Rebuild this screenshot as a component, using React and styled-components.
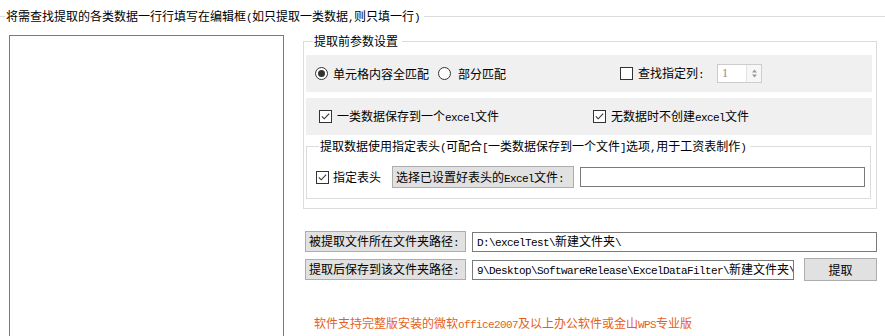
import React from "react";
import styled, { createGlobalStyle } from "styled-components";

const GlobalStyle = createGlobalStyle`
  html, body {
    margin: 0;
    background: #fff;
    overflow: hidden;
  }
  body {
    font-family: "Noto Sans CJK SC", "Liberation Sans", sans-serif;
    font-size: 12px;
    color: #000;
  }
`;

const Latin = styled.span`
  font-family: "Liberation Mono", monospace;
  font-size: 11px;
  line-height: 1;
  letter-spacing: -0.6px;
`;

const Text = styled.span`
  white-space: nowrap;
  line-height: 14px;
`;

// ascii runs get the narrow half-width look of the original ui font
function T({ children }) {
  const parts = String(children).split(/([\x21-\x7e]+)/);
  return (
    <Text>{parts.map((p, i) => (i % 2 ? <Latin key={i}>{p}</Latin> : p))}</Text>
  );
}

const Page = styled.fieldset`
  margin: 9px -2px 0;
  padding: 11px 0 0 0;
  border: 1px solid #dcdcdc;
  min-width: 0;
  min-height: 340px;
`;

const GroupTitle = styled.legend`
  margin-left: ${(p) => p.$indent}px;
  padding: 0 4px 0 1px;
  height: 14px;
  line-height: 14px;
  font-size: 12px;
  white-space: nowrap;
`;

const Body = styled.div`
  display: flex;
  align-items: flex-start;
`;

const Editor = styled.textarea`
  box-sizing: border-box;
  margin: 1px 0 0 10px;
  width: 275px;
  height: 320px;
  border: 1px solid #7a7a7a;
  resize: none;
  outline: none;
  padding: 2px;
  font: inherit;
`;

const Side = styled.div`
  margin-left: 19px;
  width: 574px;
  display: flex;
  flex-direction: column;
`;

const OptionsGroup = styled.fieldset`
  margin: 0;
  padding: 7px 4px 9px 2px;
  border: 1px solid #dcdcdc;
  min-width: 0;
`;

const Band = styled.div`
  height: 37px;
  background: #f0f0f0;
  display: flex;
  align-items: center;
  padding-left: ${(p) => p.$pad}px;
  margin-bottom: ${(p) => p.$gap || 0}px;
`;

const BandGrid = styled(Band)`
  display: grid;
  grid-template-columns: 274px 1fr;
`;

const Option = styled.label`
  display: flex;
  align-items: center;
  gap: ${(p) => p.$gap || 5}px;
  margin-left: ${(p) => p.$ml || 0}px;
  white-space: nowrap;
  line-height: 14px;
`;

const RadioDot = styled.span`
  box-sizing: border-box;
  width: 13px;
  height: 13px;
  border: 1px solid #333;
  border-radius: 50%;
  background: #fff;
  display: flex;
  align-items: center;
  justify-content: center;
  &::after {
    content: "";
    width: 7px;
    height: 7px;
    border-radius: 50%;
    background: ${(p) => (p.$on ? "#333" : "transparent")};
  }
`;

const CheckBox = styled.span`
  box-sizing: border-box;
  width: 13px;
  height: 13px;
  border: 1px solid #333;
  background: #fff;
  display: flex;
  flex: none;
`;

function Check({ on }) {
  return (
    <CheckBox>
      {on && (
        <svg width="11" height="11" viewBox="0 0 11 11">
          <path d="M1.8 5.4 L4.2 7.8 L9.2 2.6" fill="none" stroke="#333" strokeWidth="1.1" />
        </svg>
      )}
    </CheckBox>
  );
}

const Spinner = styled.div`
  box-sizing: border-box;
  margin-left: 13px;
  width: 45px;
  height: 19px;
  border: 1px solid #cccccc;
  display: flex;
  background: #fff;
`;

const SpinValue = styled.span`
  flex: 1;
  padding-left: 4px;
  color: #8a8a8a;
  line-height: 17px;
  font-family: "Liberation Serif", serif;
  font-size: 12px;
`;

const SpinArrows = styled.span`
  width: 14px;
  border-left: 1px solid #e3e3e3;
  display: flex;
  align-items: center;
  justify-content: center;
  background: #f7f7f7;
`;

const SubGroup = styled.fieldset`
  margin: 4px 1px 0 0;
  padding: 13px 5px 10px 9px;
  border: 1px solid #dcdcdc;
  min-width: 0;
`;

const Row = styled.div`
  display: flex;
  align-items: center;
  gap: ${(p) => p.$gap || 0}px;
  margin-top: ${(p) => p.$mt || 0}px;
  padding-left: ${(p) => p.$pl || 0}px;
`;

const Caption = styled.span`
  box-sizing: border-box;
  width: ${(p) => p.$w}px;
  height: ${(p) => p.$h || 21}px;
  margin-left: ${(p) => p.$ml || 0}px;
  padding: 0 3px;
  background: #e1e1e1;
  border: 1px solid #adadad;
  display: flex;
  align-items: center;
  justify-content: ${(p) => (p.$center ? "center" : "flex-start")};
  white-space: nowrap;
  flex: none;
`;

const Field = styled.div`
  box-sizing: border-box;
  width: ${(p) => p.$w}px;
  height: 20px;
  margin-left: ${(p) => p.$ml || 0}px;
  padding: 0 4px;
  border: 1px solid #7a7a7a;
  background: #fff;
  display: flex;
  align-items: center;
  white-space: nowrap;
  overflow: hidden;
  flex: none;
`;

const Note = styled.div`
  margin-top: 35px;
  padding-left: 11px;
  line-height: 14px;
  color: #e5601a;
  white-space: nowrap;
`;

export default function App() {
  return (
    <>
      <GlobalStyle />
      <Page>
        <GroupTitle $indent={6}>
          <T>将需查找提取的各类数据一行行填写在编辑框(如只提取一类数据,则只填一行)</T>
        </GroupTitle>
        <Body>
          <Editor />
          <Side>
            <OptionsGroup>
              <GroupTitle $indent={7}>提取前参数设置</GroupTitle>
              <Band $pad={9} $gap={6}>
                <Option $gap={5}>
                  <RadioDot $on />
                  <T>单元格内容全匹配</T>
                </Option>
                <Option $gap={7} $ml={9}>
                  <RadioDot />
                  <T>部分匹配</T>
                </Option>
                <Option $gap={5} $ml={114}>
                  <Check />
                  <T>查找指定列:</T>
                </Option>
                <Spinner>
                  <SpinValue>1</SpinValue>
                  <SpinArrows>
                    <svg width="7" height="11" viewBox="0 0 7 11">
                      <path d="M3.5 1.5 L6 4.5 L1 4.5 Z M1 6.5 L6 6.5 L3.5 9.5 Z" fill="#9a9a9a" />
                    </svg>
                  </SpinArrows>
                </Spinner>
              </Band>
              <BandGrid $pad={13}>
                <Option>
                  <Check on />
                  <T>一类数据保存到一个excel文件</T>
                </Option>
                <Option>
                  <Check on />
                  <T>无数据时不创建excel文件</T>
                </Option>
              </BandGrid>
              <SubGroup>
                <GroupTitle $indent={3}>
                  <T>提取数据使用指定表头(可配合[一类数据保存到一个文件]选项,用于工资表制作)</T>
                </GroupTitle>
                <Row>
                  <Option $gap={4}>
                    <Check on />
                    <T>指定表头</T>
                  </Option>
                  <Caption $w={182} $h={22} $ml={11}>
                    <T>选择已设置好表头的Excel文件:</T>
                  </Caption>
                  <Field $w={285} $ml={6} />
                </Row>
              </SubGroup>
            </OptionsGroup>

            <Row $mt={22} $pl={2}>
              <Caption $w={161}>
                <T>被提取文件所在文件夹路径:</T>
              </Caption>
              <Field $w={405} $ml={6}>
                <T>D:\excelTest\新建文件夹\</T>
              </Field>
            </Row>
            <Row $mt={6} $pl={2}>
              <Caption $w={161}>
                <T>提取后保存到该文件夹路径:</T>
              </Caption>
              <Field $w={322} $ml={6}>
                <T>9\Desktop\SoftwareRelease\ExcelDataFilter\新建文件夹\</T>
              </Field>
              <Caption $w={73} $h={23} $ml={10} $center>
                提取
              </Caption>
            </Row>
            <Note>
              <T>软件支持完整版安装的微软office2007及以上办公软件或金山WPS专业版</T>
            </Note>
          </Side>
        </Body>
      </Page>
    </>
  );
}
